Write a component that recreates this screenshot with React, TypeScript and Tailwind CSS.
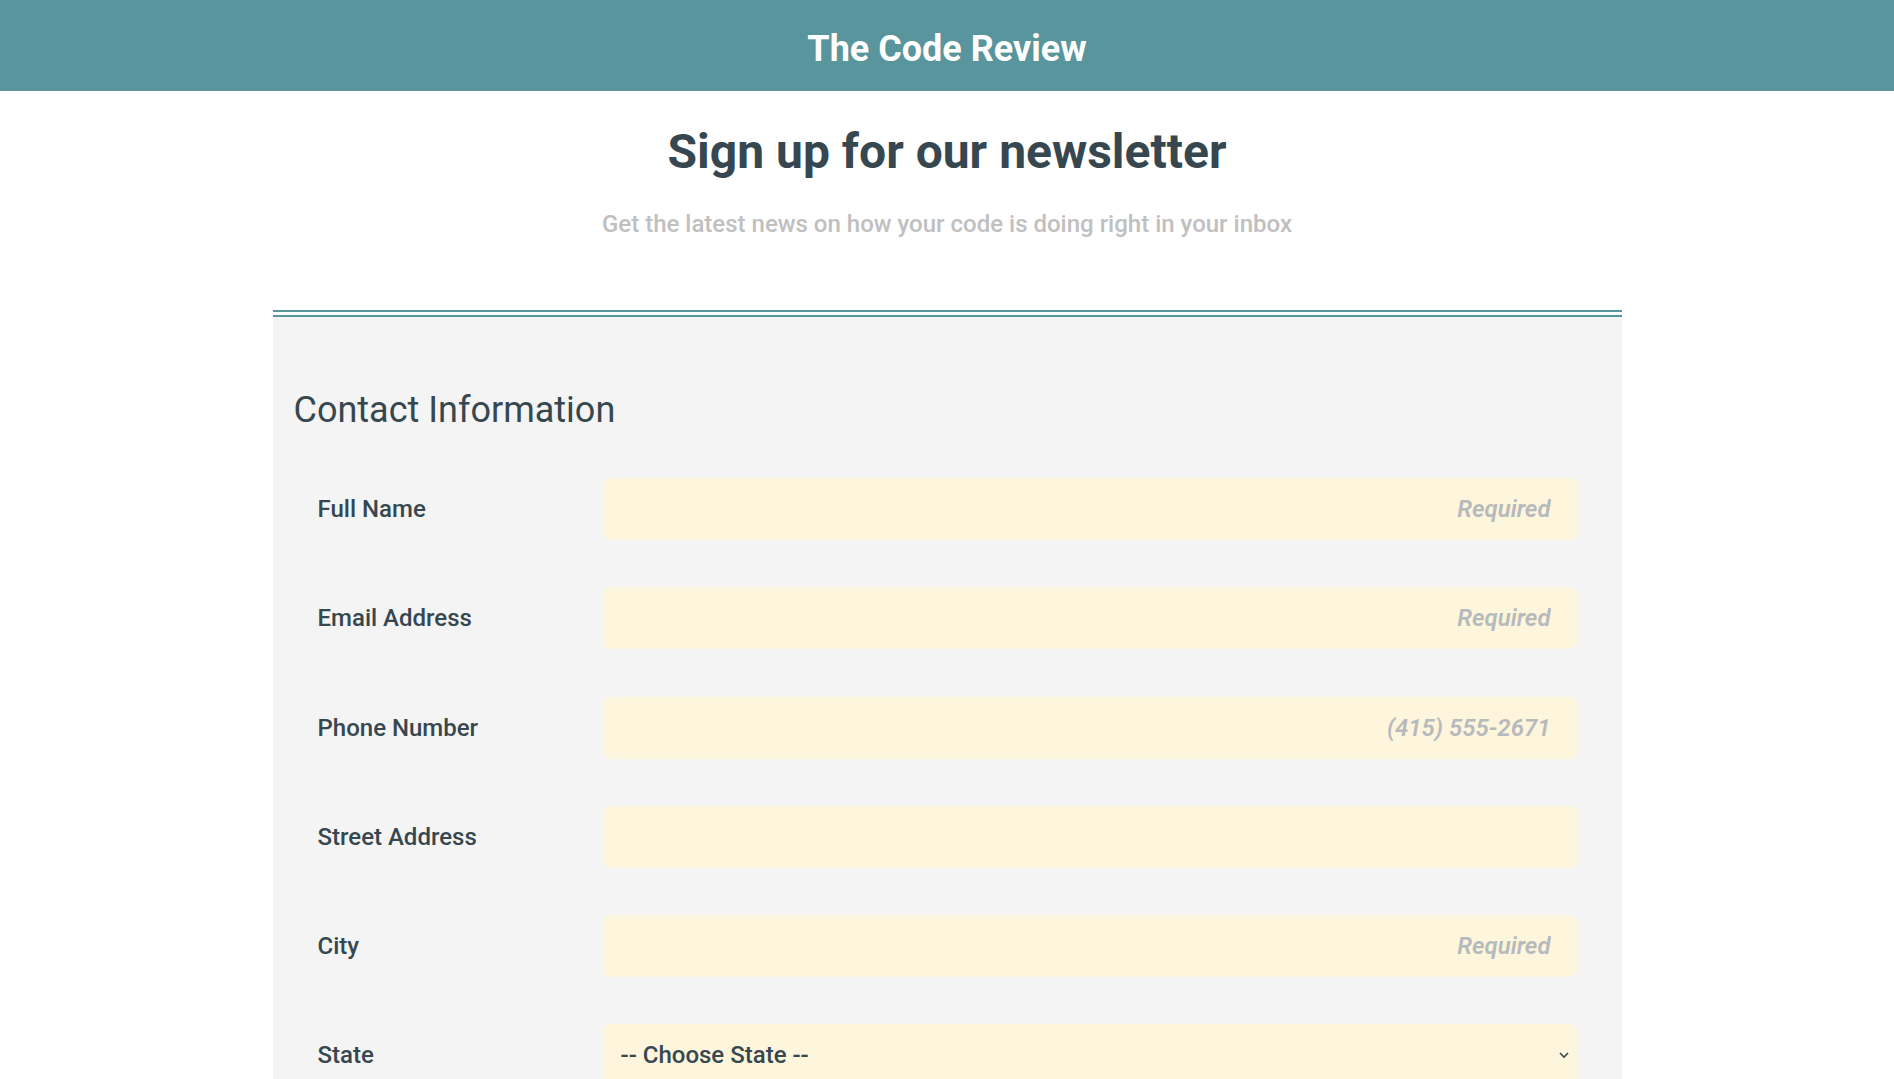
const fields = [
	{ label: "Full Name", placeholder: "Required" },
	{ label: "Email Address", placeholder: "Required" },
	{ label: "Phone Number", placeholder: "(415) 555-2671" },
	{ label: "Street Address", placeholder: "" },
	{ label: "City", placeholder: "Required" },
]

export default function App() {
	return (
		<div className="h-screen overflow-hidden bg-white font-['Roboto',sans-serif] text-[#36474f]">
			{/* HEADER */}
			<header className="flex h-[91px] items-center justify-center bg-[#58959c] pt-[6px]">
				<h1 className="text-[36px] leading-[44px] font-bold text-white">The Code Review</h1>
			</header>

			{/* INTRO */}
			<div className="mt-[33px] text-center">
				<h2 className="text-[48px] leading-[56px] font-bold">Sign up for our newsletter</h2>
				<p className="mt-[30px] text-[24px] leading-[28px] font-medium text-[#c0c0c0]">
					Get the latest news on how your code is doing right in your inbox
				</p>
			</div>

			{/* FORM */}
			<div className="mx-auto mt-[72px] w-[1349px]">
				<div className="flex flex-col gap-[3px]">
					<div className="h-[2px] bg-[#58959c]" />
					<div className="h-[2px] bg-[#58959c]" />
				</div>
				<form className="bg-[#f4f4f4] px-[21px] pt-[71px] pb-[40px]">
					<h3 className="text-[36px] leading-[44px] font-normal">Contact Information</h3>
					<div className="mt-[46px] flex flex-col gap-[47.25px] pr-[24px] pl-[24px]">
						{fields.map((f) => (
							<div className="flex items-center" key={f.label}>
								<label className="w-[285px] text-[24px] font-medium">{f.label}</label>
								<input
									className="h-[62px] flex-1 rounded-lg bg-[#fef6dc] px-[26px] text-right text-[24px] font-semibold italic outline-none placeholder:text-[#b7babd]"
									placeholder={f.placeholder}
									type="text"
								/>
							</div>
						))}
						<div className="flex items-center">
							<label className="w-[285px] text-[24px] font-medium">State</label>
							<div className="relative flex-1">
								<select className="h-[62px] w-full appearance-none rounded-lg bg-[#fef6dc] pl-[18px] text-[24px] font-medium text-[#36474f] outline-none">
									<option>-- Choose State --</option>
								</select>
								<svg
									className="pointer-events-none absolute top-1/2 right-[7px] -translate-y-1/2"
									fill="none"
									height="10"
									stroke="#36474f"
									strokeWidth="1.6"
									viewBox="0 0 12 10"
									width="12"
								>
									<path d="M2 3l4 4 4-4" />
								</svg>
							</div>
						</div>
					</div>
				</form>
			</div>
		</div>
	)
}
